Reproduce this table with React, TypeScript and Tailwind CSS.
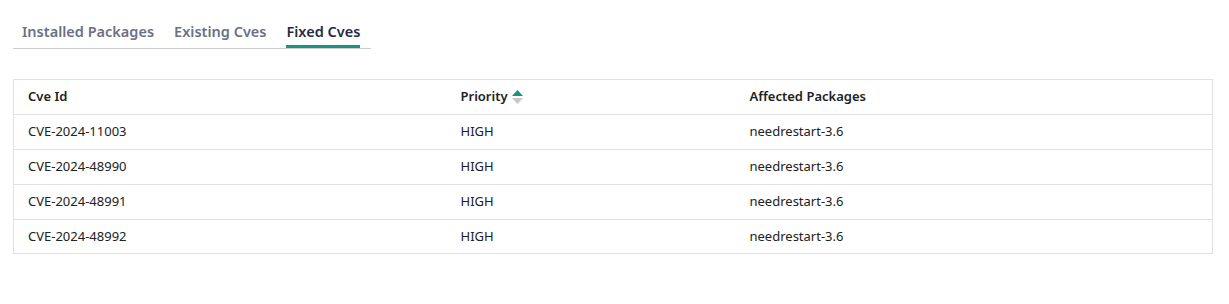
const rows = ["CVE-2024-11003", "CVE-2024-48990", "CVE-2024-48991", "CVE-2024-48992"];
const tabs = ["Installed Packages", "Existing Cves", "Fixed Cves"];

export default function App() {
  return (
    <div className="min-h-screen bg-white px-[13px] pt-[20px]" style={{ fontFamily: '"Segoe UI", "Noto Sans", "Open Sans", sans-serif' }}>
      <div className="flex w-[358px] gap-[20px] border-b border-[#c9cbd1] pl-[9px]">
        {tabs.map((t, i) => (
          <div
            key={t}
            className={`pb-[3px] text-[14.5px] font-semibold leading-[22px] border-b-[3px] ${i === 2 ? "border-[#17947f] text-[#272b40]" : "border-transparent text-[#6b7086]"}`}
          >
            {t}
          </div>
        ))}
      </div>
      <table className="mt-[30px] w-[1200px] border-collapse border border-[#e1e1e1] text-[13px] text-[#212121]">
        <thead>
          <tr className="h-[35px] border-b border-[#e1e1e1] text-left">
            <th className="w-[433px] pl-[14px] font-semibold">Cve Id</th>
            <th className="w-[289px] pl-[14px] font-semibold">
              <span className="inline-flex items-center gap-[4px]">
                Priority
                <span className="flex flex-col gap-[2px]">
                  <svg width="11" height="6" viewBox="0 0 11 6"><path d="M5.5 0L11 6H0z" fill="#17947f" /></svg>
                  <svg width="11" height="6" viewBox="0 0 11 6"><path d="M0 0h11L5.5 6z" fill="#c8c8c8" /></svg>
                </span>
              </span>
            </th>
            <th className="pl-[14px] font-semibold">Affected Packages</th>
          </tr>
        </thead>
        <tbody>
          {rows.map((r, i) => (
            <tr key={r} className={`border-b border-[#e1e1e1] ${i === rows.length - 1 ? "h-[34px]" : "h-[35px]"}`}>
              <td className="pl-[14px]">{r}</td>
              <td className="pl-[14px]">HIGH</td>
              <td className="pl-[14px]">needrestart-3.6</td>
            </tr>
          ))}
        </tbody>
      </table>
    </div>
  );
}
